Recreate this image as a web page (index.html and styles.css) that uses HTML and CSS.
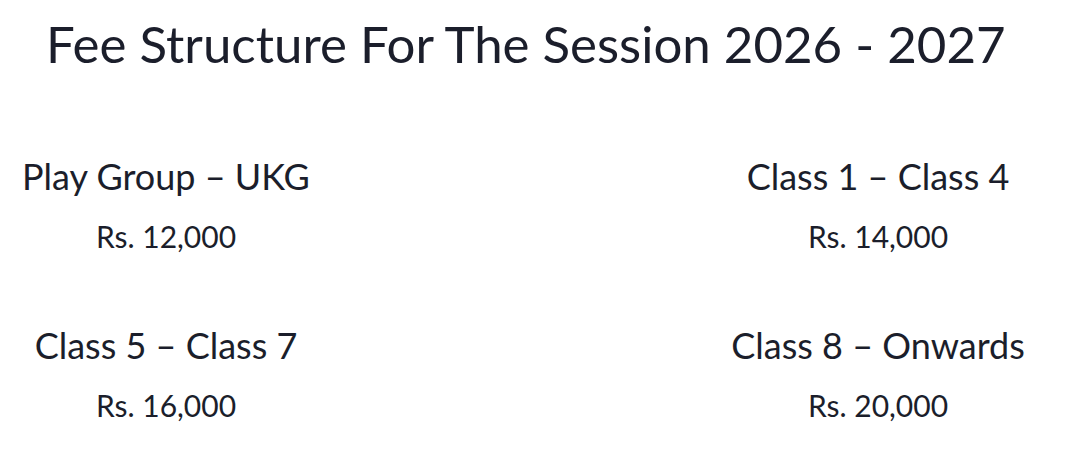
FILE: index.html
```html
<!DOCTYPE html>
<html>
<head>
<meta charset="utf-8">
<link rel="stylesheet" href="styles.css">
</head>
<body>
<section class="fees">
  <h1 class="fees-title">Fee Structure For The Session 2026 - 2027</h1>
  <div class="fees-grid">
    <div class="fee fee-left">
      <h3 class="fee-name">Play Group – UKG</h3>
      <p class="fee-price">Rs. 12,000</p>
    </div>
    <div class="fee fee-right">
      <h3 class="fee-name">Class 1 – Class 4</h3>
      <p class="fee-price">Rs. 14,000</p>
    </div>
    <div class="fee fee-left">
      <h3 class="fee-name">Class 5 – Class 7</h3>
      <p class="fee-price">Rs. 16,000</p>
    </div>
    <div class="fee fee-right">
      <h3 class="fee-name">Class 8 – Onwards</h3>
      <p class="fee-price">Rs. 20,000</p>
    </div>
  </div>
</section>
</body>
</html>
```
FILE: styles.css
```css
html, body {
  margin: 0;
  background: #ffffff;
}
body {
  font-family: "Lato", "Noto Sans", sans-serif;
  color: #1b1e2b;
}
.fees {
  width: 1071px;
  height: 464px;
}
.fees-title {
  margin: 0;
  padding: 14px 0 0 46px;
  font-size: 51px;
  font-weight: 400;
  line-height: 60px;
}
.fees-grid {
  display: grid;
  grid-template-columns: 332px 1fr 386px;
  row-gap: 73px;
  padding-top: 82px;
}
.fee-left { grid-column: 1; }
.fee-right { grid-column: 3; }
.fee {
  display: flex;
  flex-direction: column;
  align-items: center;
  gap: 24px;
}
.fee-name {
  margin: 0;
  font-size: 36px;
  font-weight: 400;
  line-height: 40px;
  white-space: nowrap;
}
.fee-price {
  margin: 0;
  font-size: 30px;
  font-weight: 400;
  line-height: 32px;
  white-space: nowrap;
}
```
